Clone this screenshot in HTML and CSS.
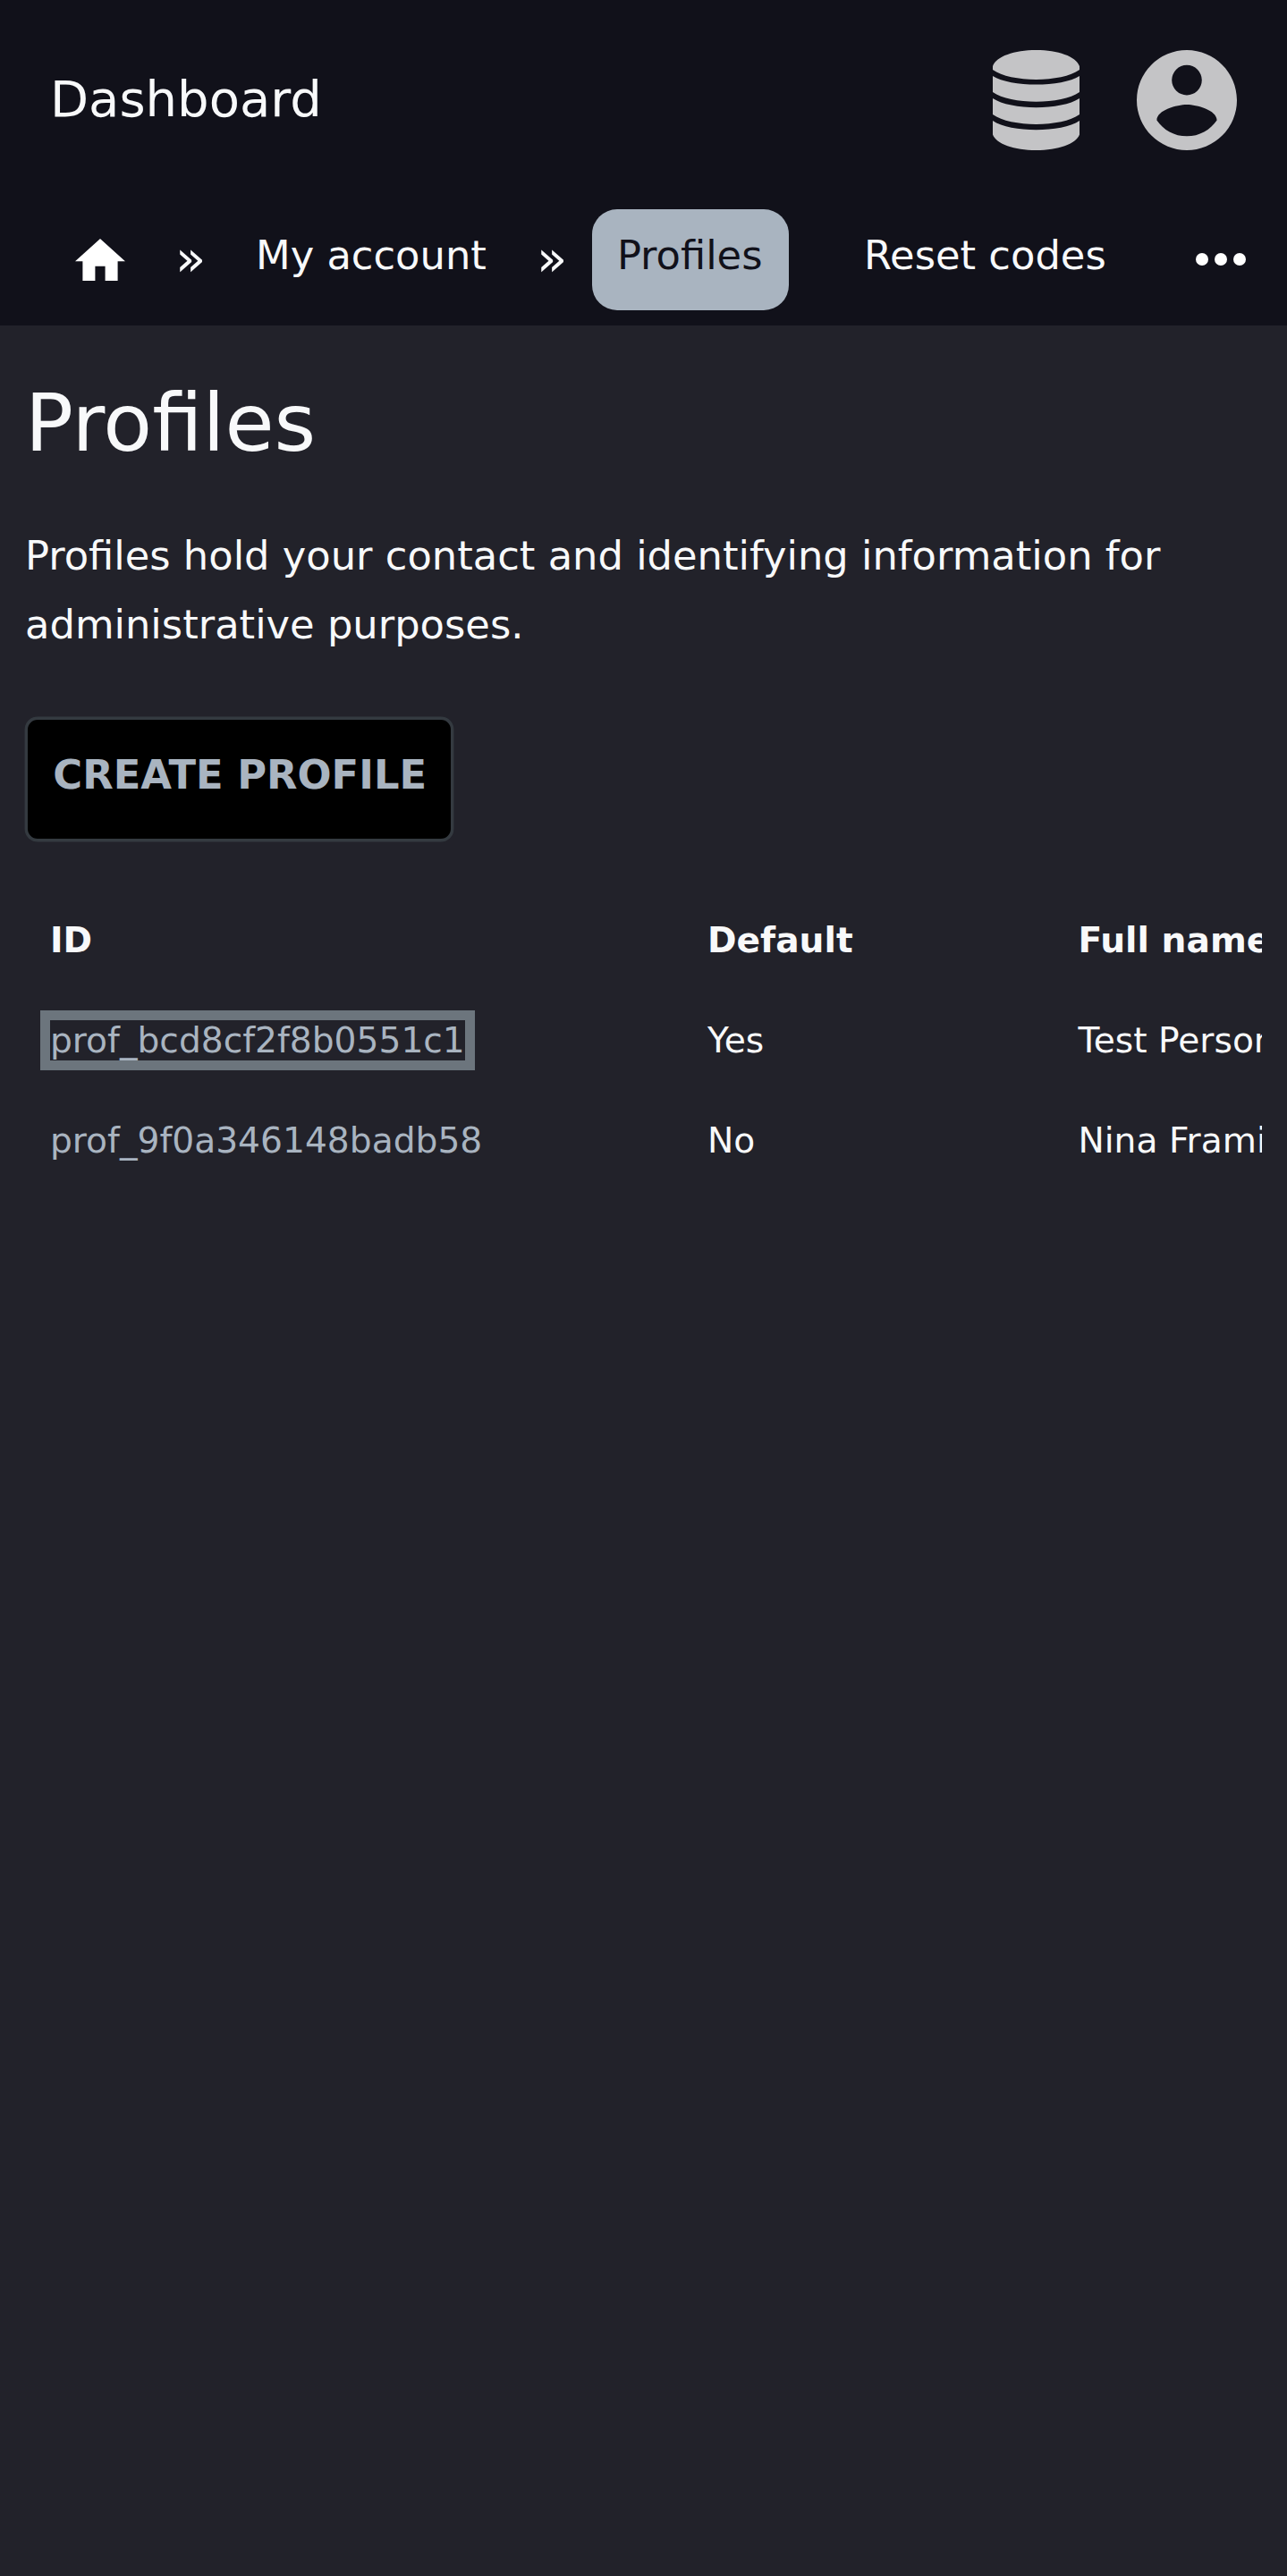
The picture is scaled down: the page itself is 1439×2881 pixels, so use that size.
FILE: index.html
```html
<!DOCTYPE html>
<html lang="en">
<head>
<meta charset="utf-8">
<title>Dashboard</title>
<link rel="stylesheet" href="styles.css">
</head>
<body>
<header class="header">
  <div class="topbar">
    <a class="brand">Dashboard</a>
    <div class="tools">
      <svg class="icon-db" viewBox="0 0 97 112"><path d="M0 18C4 7 24 0 48.500 0S93 7 97 18V22C77 36.500 20 36.500 0 22ZM0 29C20 41.800 77 41.800 97 29V47C77 61.300 20 61.300 0 47ZM0 54C20 67.500 77 67.500 97 54V72C77 86.500 20 86.500 0 72ZM0 79C20 92.600 77 92.600 97 79V94.500C93 105 73 112 48.500 112S4 105 0 94.500Z"/></svg>
      <svg class="icon-user" viewBox="2 2 20 20"><path d="M12,19.2C9.5,19.2 7.29,17.92 6,16C6.03,14 10,12.9 12,12.9C14,12.9 17.97,14 18,16C16.71,17.92 14.5,19.2 12,19.2M12,5A3,3 0 0,1 15,8A3,3 0 0,1 12,11A3,3 0 0,1 9,8A3,3 0 0,1 12,5M12,2A10,10 0 0,0 2,12A10,10 0 0,0 12,22A10,10 0 0,0 22,12C22,6.47 17.5,2 12,2Z"/></svg>
    </div>
  </div>
  <nav class="nav">
    <a class="home"><svg class="icon-home" viewBox="2 3 20 17"><path d="M10,20V14H14V20H19V12H22L12,3L2,12H5V20H10Z"/></svg></a>
    <span class="sep">»</span>
    <a class="nav-link">My account</a>
    <span class="sep">»</span>
    <a class="nav-link active">Profiles</a>
    <a class="nav-link reset">Reset codes</a>
    <a class="more"><svg class="icon-more" viewBox="4 10 16 4"><circle cx="6" cy="12" r="2"/><circle cx="12" cy="12" r="2"/><circle cx="18" cy="12" r="2"/></svg></a>
  </nav>
</header>
<main class="content">
  <h1 class="title">Profiles</h1>
  <p class="lead">Profiles hold your contact and identifying information for administrative purposes.</p>
  <a class="button">CREATE PROFILE</a>
  <div class="table-wrap">
    <table class="table">
      <thead><tr><th class="col-id">ID</th><th class="col-default">Default</th><th class="col-name">Full name</th></tr></thead>
      <tbody>
        <tr><td><a class="link focused">prof_bcd8cf2f8b0551c1</a></td><td>Yes</td><td>Test Person</td></tr>
        <tr><td><a class="link">prof_9f0a346148badb58</a></td><td>No</td><td>Nina Frami</td></tr>
      </tbody>
    </table>
  </div>
</main>
</body>
</html>
```
FILE: styles.css
```css
* { box-sizing: border-box; }

body {
  margin: 0;
  min-height: 2881px;
  background: #22222a;
  color: #f8f9fa;
  font-family: "DejaVu Sans", sans-serif;
  font-size: 44.8px;
  line-height: 77px;
}

.header { height: 364px; background: #11111a; }

.topbar {
  display: flex;
  justify-content: space-between;
  height: 234px;
  padding: 56px 56px 0;
}

.brand { font-size: 56px; line-height: 109px; }

.tools { display: flex; gap: 64px; fill: #c4c4c6; }
.icon-db { width: 97px; height: 112px; }
.icon-user { width: 112px; height: 112px; }

.nav { display: flex; height: 113px; white-space: nowrap; }
.home { width: 140px; padding: 32.7px 0 0 84px; }
.icon-home { display: block; width: 56px; height: 47.6px; fill: #fff; }
.sep { width: 34px; margin-left: 56px; font-size: 56px; line-height: 109px; }

.nav-link {
  height: 113px;
  padding: 0 28px;
  line-height: 104px;
}
.sep + .nav-link { margin-left: 28px; }
.nav-link + .sep { margin-left: 28px; }
.nav-link.active {
  width: 220.6px;
  height: 112.4px;
  margin-top: 0.3px;
  border-radius: 28px;
  background: #a9b4c0;
  color: #11111a;
}
.reset { margin-left: 55.5px; }
.more { padding: 49.3px 0 0; margin-left: auto; margin-right: 46px; }
.icon-more { display: block; width: 56px; height: 14px; fill: #fff; }

.content { padding: 0 28px; }

.title {
  margin: 0;
  padding-top: 53px;
  font-size: 89.6px;
  font-weight: 400;
  line-height: 112px;
}

.lead { margin: 54px 0 0; }

.button {
  display: block;
  width: 479px;
  height: 139px;
  margin-top: 65px;
  padding-left: 28.3px;
  border: 3px solid #343a40;
  border-radius: 14px;
  box-shadow: 0 0 0 0.4px #343a40;
  background: #000;
  color: #a9b4c0;
  font-weight: 700;
  line-height: 124px;
}

.table-wrap { margin-top: 55px; overflow: hidden; }

.table {
  width: 1700px;
  border-spacing: 0;
  table-layout: fixed;
  font-size: 39.2px;
  line-height: 112px;
}
.table th, .table td { height: 112px; padding: 0 0 0 28px; text-align: left; }
.col-id { width: 735px; }
.col-default { width: 414.4px; }

.link { color: #a9b4c0; }
.focused { outline: 11px solid #6c757d; }
```
